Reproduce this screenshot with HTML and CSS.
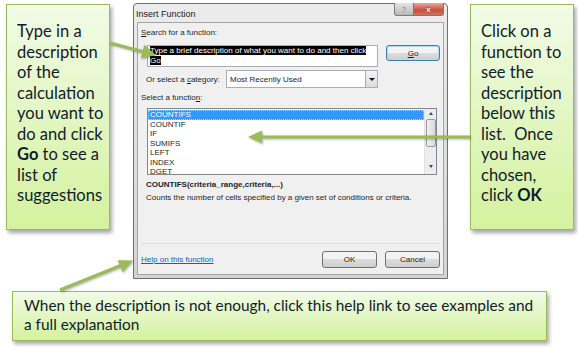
FILE: index.html
```html
<!DOCTYPE html>
<html lang="en">
  <head>
    <meta charset="UTF-8" />
    <meta name="viewport" content="width=device-width, initial-scale=1.0" />
    <title>Insert Function | Help</title>
    <link rel="stylesheet" href="styles.css">
  </head>

  <body>
    <section class="canvas">
      <div class="note note_left">
        <p>Type in a<br />description<br />of the<br />calculation<br />you want to<br />do and click<br /><b>Go</b> to see a<br />list of<br />suggestions</p>
      </div>

      <div class="dialog">
        <div class="title_bar">
          <span class="title">Insert Function</span>
          <div class="title_buttons">
            <span class="btn_help">?</span>
            <span class="btn_close">x</span>
          </div>
        </div>

        <div class="client">
          <p class="label"><u>S</u>earch for a function:</p>
          <div class="search_row">
            <div class="search_box">
              <span class="sel">Type a brief description of what you want to do and then click</span><br />
              <span class="sel">Go</span>
            </div>
            <span class="btn btn_go"><u>G</u>o</span>
          </div>

          <div class="category_row">
            <span class="category_label">Or select a <u>c</u>ategory:</span>
            <div class="select">
              <span>Most Recently Used</span>
              <span class="drop"></span>
            </div>
          </div>

          <p class="label">Select a functio<u>n</u>:</p>
          <div class="list">
            <ul>
              <li class="active">COUNTIFS</li>
              <li>COUNTIF</li>
              <li>IF</li>
              <li>SUMIFS</li>
              <li>LEFT</li>
              <li>INDEX</li>
              <li>DGET</li>
            </ul>
            <div class="scrollbar">
              <span class="arrow_up"></span>
              <span class="thumb"></span>
              <span class="arrow_down"></span>
            </div>
          </div>

          <p class="signature">COUNTIFS(criteria_range,criteria,...)</p>
          <p class="desc">Counts the number of cells specified by a given set of conditions or criteria.</p>

          <div class="footer">
            <a href="#" class="help_link">Help on this function</a>
            <div class="buttons">
              <span class="btn">OK</span>
              <span class="btn">Cancel</span>
            </div>
          </div>
        </div>
      </div>

      <div class="note note_right">
        <p>Click on a<br />function to<br />see the<br />description<br />below this<br />list.&nbsp; Once<br />you have<br />chosen,<br />click <b>OK</b></p>
      </div>

      <div class="note note_bottom">
        <p>When the description is not enough, click this help link to see examples and<br />a full explanation</p>
      </div>

      <!-- callout arrows -->
      <svg class="arrows" width="578" height="347" viewBox="0 0 578 347">
        <g fill="#9bbb59" stroke="#9bbb59">
          <line x1="110" y1="43" x2="144" y2="52" stroke-width="3" />
          <polygon points="156,55 140.7,58.4 144.3,44.8" stroke="none" />
          <line x1="470" y1="137" x2="260" y2="137" stroke-width="3" />
          <polygon points="248,137 262,130.5 262,143.5" stroke="none" />
          <line x1="60" y1="290" x2="122" y2="265" stroke-width="3" />
          <polygon points="133,260.5 122.5,272.3 117.6,260.3" stroke="none" />
        </g>
      </svg>
    </section>
  </body>
</html>
```

FILE: styles.css
```css
* {
  padding: 0;
  margin: 0;
  box-sizing: border-box;
}

body {
  background: #fff;
  width: 578px;
  height: 347px;
  overflow: hidden;
  font-family: "Lato", sans-serif;
}

.canvas {
  position: relative;
  width: 578px;
  height: 347px;
}

/* green callouts */
.note {
  position: absolute;
  background: linear-gradient(#f1fbe6, #d4f29e);
  border: 1px solid #9bbb59;
  box-shadow: 2px 3px 4px rgba(0, 0, 0, 0.35);
  color: #111b2b;
}

.note_left,
.note_right {
  top: 4px;
  width: 104px;
  height: 226px;
  padding: 16px 0 0 10px;
  font-size: 16.5px;
  line-height: 20.5px;
}

.note_left {
  left: 6px;
}

.note_right {
  left: 470px;
}

.note_bottom {
  left: 12px;
  top: 291px;
  width: 535px;
  height: 50px;
  padding: 4px 0 0 11px;
  font-size: 15.4px;
  line-height: 19px;
}

/* the dialog */
.dialog {
  position: absolute;
  left: 133px;
  top: 3px;
  width: 315px;
  height: 276px;
  padding: 0 3px 3px;
  border: 1px solid #6f6f6f;
  border-radius: 4px 4px 0 0;
  background: linear-gradient(#ececec, #d3d3d3);
  font-family: "Liberation Sans", Arial, sans-serif;
  font-size: 8px;
  color: #1e1e1e;
}

.title_bar {
  display: flex;
  justify-content: space-between;
  height: 18px;
}

.title {
  margin: 5px 0 0 -1px;
  font-size: 9px;
  color: #222;
}

.title_buttons {
  display: flex;
  margin-top: -1px;
  height: 13px;
}

.btn_help,
.btn_close {
  display: flex;
  align-items: center;
  justify-content: center;
  border: 1px solid #7a7a7a;
  border-top: none;
  font-size: 8px;
  font-weight: 700;
  color: #fff;
}

.btn_help {
  width: 20px;
  border-radius: 0 0 0 3px;
  background: linear-gradient(#e4e4e4, #b9b9b9);
  color: #888;
  text-shadow: 0 0 1px #fff;
}

.btn_close {
  width: 30px;
  border-left: none;
  border-radius: 0 0 3px 0;
  background: linear-gradient(#e9a99c, #c8503d 60%, #d2725f);
  text-shadow: 0 0 2px #6b1a10;
}

.client {
  height: 253px;
  background: #f0f0f0;
  border: 1px solid #a5a5a5;
}

.label {
  margin-top: 5px;
  padding-left: 3px;
  line-height: 10px;
}

.search_row {
  display: flex;
  align-items: flex-start;
  margin-top: 7px;
  padding-left: 9px;
  column-gap: 8px;
}

.search_box {
  width: 231px;
  height: 22px;
  padding: 0 2px;
  background: #fff;
  border: 1px solid #abadb3;
  line-height: 10px;
}

.sel {
  background: #000;
  color: #fff;
}

.btn {
  display: flex;
  align-items: center;
  justify-content: center;
  width: 55px;
  height: 17px;
  border: 1px solid #707070;
  border-radius: 3px;
  background: linear-gradient(#f3f3f3 50%, #dddddd 50%, #cfcfcf);
  color: #1e1e1e;
}

.btn_go {
  width: 54px;
  height: 16px;
  border-color: #3c7fb1;
  box-shadow: inset 0 0 0 1px #a9dcf6;
}

.category_row {
  display: flex;
  align-items: center;
  margin-top: 3px;
  padding-left: 8px;
}

.category_label {
  width: 80px;
}

.select {
  display: flex;
  align-items: center;
  justify-content: space-between;
  width: 152px;
  height: 18px;
  padding-left: 3px;
  background: #fff;
  border: 1px solid #abadb3;
}

.drop {
  position: relative;
  width: 12px;
  height: 16px;
  border-left: 1px solid #abadb3;
  background: linear-gradient(#f4f4f4, #dcdcdc);
}

.drop::after {
  content: "";
  position: absolute;
  left: 3px;
  top: 7px;
  border: 3px solid transparent;
  border-top: 3px solid #111;
}

.list {
  display: flex;
  margin: 5px 0 0 9px;
  width: 290px;
  height: 67px;
  background: #fff;
  border: 1px solid #828790;
}

.list ul {
  flex: 1;
  list-style: none;
  padding-top: 1px;
}

.list li {
  height: 9.5px;
  line-height: 9.5px;
  padding-left: 2px;
}

.list li.active {
  background: #3399ff;
  color: #fff;
  outline: 1px dotted #b6d8ff;
  outline-offset: -1px;
}

.scrollbar {
  display: flex;
  flex-direction: column;
  align-items: center;
  width: 12px;
  background: #ededed;
  border-left: 1px solid #e2e2e2;
}

.arrow_up,
.arrow_down {
  width: 0;
  height: 0;
  margin: 4px 0;
  border: 2.5px solid transparent;
}

.arrow_up {
  border-bottom: 3px solid #444;
  margin-top: 1px;
}

.arrow_down {
  border-top: 3px solid #444;
  margin-top: auto;
}

.thumb {
  width: 10px;
  height: 28px;
  border: 1px solid #9a9a9a;
  border-radius: 2px;
  background: linear-gradient(90deg, #f3f3f3, #d8d8d8);
}

.signature {
  margin-top: 5px;
  padding-left: 8px;
  line-height: 10px;
  font-weight: 700;
}

.desc {
  margin-top: 3px;
  padding-left: 8px;
  line-height: 10px;
}

.footer {
  display: flex;
  justify-content: space-between;
  align-items: center;
  margin: 40px 3px 0 3px;
  padding-top: 7px;
  border-top: 1px solid #dcdcdc;
}

.help_link {
  color: #0066cc;
  text-decoration: underline;
}

.buttons {
  display: flex;
  column-gap: 8px;
}

.arrows {
  position: absolute;
  left: 0;
  top: 0;
  filter: drop-shadow(1px 1px 1px rgba(0, 0, 0, 0.3));
}
```
